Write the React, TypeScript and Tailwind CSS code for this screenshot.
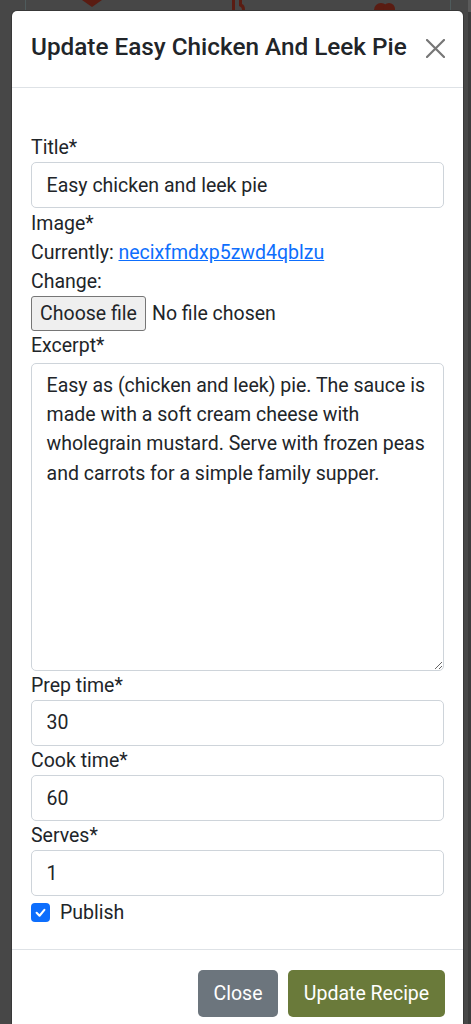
import React from 'react';

const excerpt =
  'Easy as (chicken and leek) pie. The sauce is made with a soft cream cheese with wholegrain mustard. Serve with frozen peas and carrots for a simple family supper.';

const Label: React.FC<{ children: React.ReactNode; className?: string }> = ({ children, className = '' }) => (
  <label className={`block text-[19.5px] leading-[29.3px] ${className}`}>{children}</label>
);

const TextInput: React.FC<{ value: string }> = ({ value }) => (
  <input
    readOnly
    value={value}
    className="block h-[46px] w-full rounded-[5px] border border-[#ced4da] bg-white px-[14.6px] text-[19.5px] text-[#212529] outline-none"
  />
);

const Backdrop = () => (
  <div className="relative h-[10px] overflow-hidden">
    <div className="absolute left-[25px] top-0 h-full w-px bg-[#4f5b5c]" />
    <div className="absolute left-[450px] top-0 h-full w-px bg-[#4f5b5c]" />
    <svg className="absolute left-[82px] top-0" width="20" height="8" viewBox="0 0 20 8">
      <path d="M0 0 L20 0 L10 7 Z" fill="#5a1c12" />
    </svg>
    <svg className="absolute left-[232px] top-0" width="14" height="10" viewBox="0 0 14 10">
      <rect x="0" y="0" width="3" height="10" fill="#5a1c12" />
      <path d="M7 0 h3 v4 q3 1 3 6 h-3 q0-3-3-4 z" fill="#5a1c12" />
    </svg>
    <svg className="absolute left-[372px] top-[2px]" width="26" height="10" viewBox="0 0 26 10">
      <circle cx="9" cy="8" r="7" fill="#5a1c12" />
      <circle cx="17" cy="7" r="6" fill="#5a1c12" />
    </svg>
  </div>
);

export default function App() {
  return (
    <div className="flex h-[1024px] w-full overflow-hidden bg-[#474747] font-[Roboto,sans-serif] text-[#212529]">
      <div className="flex w-[468px] flex-col">
        <Backdrop />
        <div className="ml-[11px] flex w-[453px] flex-1 flex-col rounded-t-[6px] border border-b-0 border-black/20 bg-white bg-clip-padding">
          {/* header */}
          <div className="flex h-[77px] items-start justify-between border-b border-[#dee2e6] pl-[19px] pr-[18px] pt-[21px]">
            <h5 className="text-[24.3px] font-medium leading-[29px]">Update Easy Chicken And Leek Pie</h5>
            <svg className="mt-[7px]" width="19" height="19" viewBox="0 0 19 19">
              <path d="M1 1 L18 18 M18 1 L1 18" stroke="#767676" strokeWidth="2.2" strokeLinecap="round" />
            </svg>
          </div>

          {/* body */}
          <form className="flex flex-col px-[19px] pb-[22px] pt-[45px] text-[19.5px]">
            <Label>Title*</Label>
            <TextInput value="Easy chicken and leek pie" />

            <Label className="mt-px leading-[29px]">Image*</Label>
            <p className="leading-[29px]">
              Currently:{' '}
              <a href="#" className="text-[#0d6efd] underline">
                necixfmdxp5zwd4qblzu
              </a>
            </p>
            <p className="leading-[29px]">Change:</p>
            <div className="flex h-[35px] items-center">
              <span className="flex h-[35px] w-[115px] shrink-0 items-center justify-center rounded-[3px] border border-[#767676] bg-[#efefef] text-[19.5px]">
                Choose file
              </span>
              <span className="ml-[6px]">No file chosen</span>
            </div>

            <Label>Excerpt*</Label>
            <textarea
              readOnly
              defaultValue={excerpt}
              className="mt-[2px] block h-[308px] w-full resize-y rounded-[5px] border border-[#ced4da] px-[14.6px] py-[7.3px] text-[19.5px] leading-[29.3px] text-[#212529] outline-none"
            />

            <Label>Prep time*</Label>
            <TextInput value="30" />
            <Label>Cook time*</Label>
            <TextInput value="60" />
            <Label>Serves*</Label>
            <TextInput value="1" />

            <div className="mt-px flex h-[29.3px] items-center">
              <span className="flex h-[19px] w-[19px] shrink-0 items-center justify-center rounded-[4px] bg-[#0d6efd]">
                <svg width="13" height="13" viewBox="0 0 20 20">
                  <path d="M4 10.5 L8.5 15 L16 6" fill="none" stroke="#fff" strokeWidth="3.2" strokeLinecap="round" strokeLinejoin="round" />
                </svg>
              </span>
              <span className="ml-[10px]">Publish</span>
            </div>
          </form>

          {/* footer */}
          <div className="flex flex-1 items-start justify-end gap-[10px] border-t border-[#dee2e6] pr-[18px] pt-[20px]">
            <button type="button" className="h-[47px] w-[80px] rounded-[5px] bg-[#6c757d] text-[19.5px] text-white">
              Close
            </button>
            <button type="button" className="h-[47px] w-[157px] rounded-[5px] bg-[#6a7a3a] text-[19.5px] text-white">
              Update Recipe
            </button>
          </div>
        </div>
      </div>
      <div className="flex w-[3px] flex-col">
        <div className="h-[12px] bg-[#5a5a5a]" />
        <div className="flex-1 bg-[#3b3b3b]" />
      </div>
    </div>
  );
}
